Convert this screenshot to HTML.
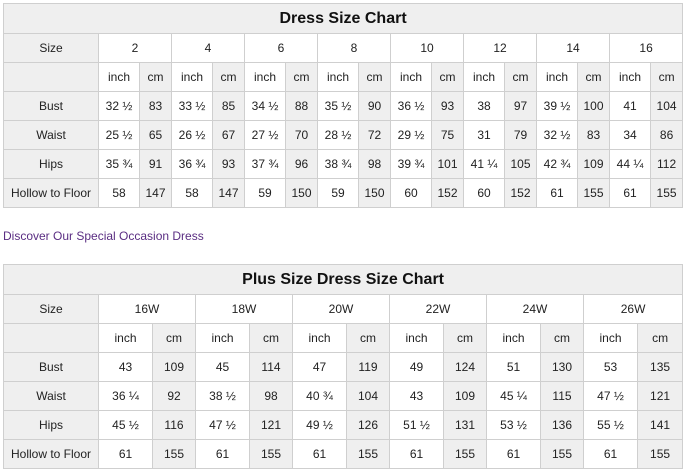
<!DOCTYPE html>
<html><head><meta charset="utf-8"><style>
body{margin:0;width:684px;height:471px;background:#fff;font-family:"Liberation Sans",Arial,sans-serif;position:relative;overflow:hidden}
table{position:absolute;left:3px;border-collapse:collapse;table-layout:fixed;font-size:12px;color:#222}
td{border:1px solid #cfcfcf;text-align:center;padding:0;height:28px;white-space:nowrap;overflow:hidden}
td.t{background:#efefef;font-size:16px;font-weight:bold;color:#111;height:29px}
td.h,td.g{background:#efefef}
.link{position:absolute;left:3px;top:229px;font-size:12px;color:#5a2d82}
col.a{width:41px}col.b{width:32px}
col.c{width:54px}col.d{width:43px}
</style></head><body>
<table style="top:3px;width:679px">
<colgroup><col style="width:95px"><col class="a"><col class="b"><col class="a"><col class="b"><col class="a"><col class="b"><col class="a"><col class="b"><col class="a"><col class="b"><col class="a"><col class="b"><col class="a"><col class="b"><col class="a"><col class="b"></colgroup>
<tr><td class="t" colspan="17">Dress Size Chart</td></tr>
<tr><td class="h">Size</td><td colspan="2">2</td><td colspan="2">4</td><td colspan="2">6</td><td colspan="2">8</td><td colspan="2">10</td><td colspan="2">12</td><td colspan="2">14</td><td colspan="2">16</td></tr>
<tr><td class="h"></td><td>inch</td><td class="g">cm</td><td>inch</td><td class="g">cm</td><td>inch</td><td class="g">cm</td><td>inch</td><td class="g">cm</td><td>inch</td><td class="g">cm</td><td>inch</td><td class="g">cm</td><td>inch</td><td class="g">cm</td><td>inch</td><td class="g">cm</td></tr>
<tr><td class="h">Bust</td><td>32 ½</td><td class="g">83</td><td>33 ½</td><td class="g">85</td><td>34 ½</td><td class="g">88</td><td>35 ½</td><td class="g">90</td><td>36 ½</td><td class="g">93</td><td>38</td><td class="g">97</td><td>39 ½</td><td class="g">100</td><td>41</td><td class="g">104</td></tr>
<tr><td class="h">Waist</td><td>25 ½</td><td class="g">65</td><td>26 ½</td><td class="g">67</td><td>27 ½</td><td class="g">70</td><td>28 ½</td><td class="g">72</td><td>29 ½</td><td class="g">75</td><td>31</td><td class="g">79</td><td>32 ½</td><td class="g">83</td><td>34</td><td class="g">86</td></tr>
<tr><td class="h">Hips</td><td>35 ¾</td><td class="g">91</td><td>36 ¾</td><td class="g">93</td><td>37 ¾</td><td class="g">96</td><td>38 ¾</td><td class="g">98</td><td>39 ¾</td><td class="g">101</td><td>41 ¼</td><td class="g">105</td><td>42 ¾</td><td class="g">109</td><td>44 ¼</td><td class="g">112</td></tr>
<tr><td class="h">Hollow to Floor</td><td>58</td><td class="g">147</td><td>58</td><td class="g">147</td><td>59</td><td class="g">150</td><td>59</td><td class="g">150</td><td>60</td><td class="g">152</td><td>60</td><td class="g">152</td><td>61</td><td class="g">155</td><td>61</td><td class="g">155</td></tr>
</table>
<div class="link">Discover Our Special Occasion Dress</div>
<table style="top:264px;width:679px">
<colgroup><col style="width:95px"><col class="c"><col class="d"><col class="c"><col class="d"><col class="c"><col class="d"><col class="c"><col class="d"><col class="c"><col class="d"><col class="c"><col style="width:45px"></colgroup>
<tr><td class="t" colspan="13">Plus Size Dress Size Chart</td></tr>
<tr><td class="h">Size</td><td colspan="2">16W</td><td colspan="2">18W</td><td colspan="2">20W</td><td colspan="2">22W</td><td colspan="2">24W</td><td colspan="2">26W</td></tr>
<tr><td class="h"></td><td>inch</td><td class="g">cm</td><td>inch</td><td class="g">cm</td><td>inch</td><td class="g">cm</td><td>inch</td><td class="g">cm</td><td>inch</td><td class="g">cm</td><td>inch</td><td class="g">cm</td></tr>
<tr><td class="h">Bust</td><td>43</td><td class="g">109</td><td>45</td><td class="g">114</td><td>47</td><td class="g">119</td><td>49</td><td class="g">124</td><td>51</td><td class="g">130</td><td>53</td><td class="g">135</td></tr>
<tr><td class="h">Waist</td><td>36 ¼</td><td class="g">92</td><td>38 ½</td><td class="g">98</td><td>40 ¾</td><td class="g">104</td><td>43</td><td class="g">109</td><td>45 ¼</td><td class="g">115</td><td>47 ½</td><td class="g">121</td></tr>
<tr><td class="h">Hips</td><td>45 ½</td><td class="g">116</td><td>47 ½</td><td class="g">121</td><td>49 ½</td><td class="g">126</td><td>51 ½</td><td class="g">131</td><td>53 ½</td><td class="g">136</td><td>55 ½</td><td class="g">141</td></tr>
<tr><td class="h">Hollow to Floor</td><td>61</td><td class="g">155</td><td>61</td><td class="g">155</td><td>61</td><td class="g">155</td><td>61</td><td class="g">155</td><td>61</td><td class="g">155</td><td>61</td><td class="g">155</td></tr>
</table>
</body></html>
